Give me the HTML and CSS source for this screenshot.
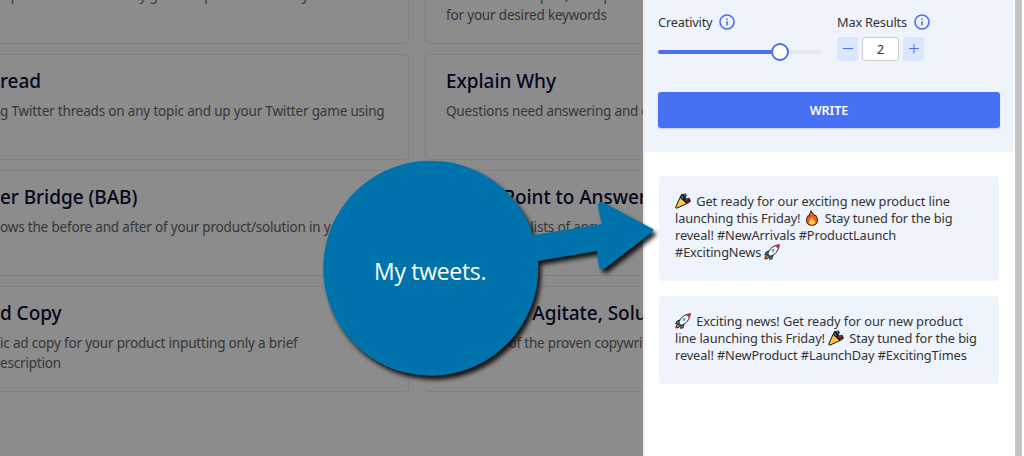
FILE: index.html
```
<!DOCTYPE html>
<html lang="en">
<head>
    <meta charset="UTF-8">
    <meta name="viewport" content="width=device-width, initial-scale=1.0">
    <title>AI Writer</title>
    <link rel="stylesheet" href="styles.css">
</head>
<body>
    <div class="app">
        <main class="templates">
            <div class="card left">
                <h2>Intro</h2>
                <p>a post that includes any great ad post made today</p>
            </div>
            <div class="card">
                <h2>Meta</h2>
                <p>Create short copies, then posts<br>for your desired keywords</p>
            </div>
            <div class="card left">
                <h2>read</h2>
                <p>g Twitter threads on any topic and up your Twitter game using</p>
            </div>
            <div class="card">
                <h2>Explain Why</h2>
                <p>Questions need answering and questions</p>
            </div>
            <div class="card left">
                <h2>er Bridge (BAB)</h2>
                <p>ows the before and after of your product/solution in your</p>
            </div>
            <div class="card">
                <h2>Bullet Point to Answer</h2>
                <p>Generate the lists of answers to points</p>
            </div>
            <div class="card left">
                <h2>d Copy</h2>
                <p>ic ad copy for your product inputting only a brief<br>escription</p>
            </div>
            <div class="card">
                <h2>Problem, Agitate, Solution</h2>
                <p>Make use of the proven copywriting</p>
            </div>
        </main>
        <div class="overlay"></div>

        <aside class="drawer">
            <section class="settings">
                <div class="fields">
                    <div class="field creativity">
                        <label>Creativity
                            <svg class="info" viewBox="0 0 16 16"><circle cx="8" cy="8" r="7"/><path d="M8 7.2v4.1M8 4.4v1.5"/></svg>
                        </label>
                        <div class="slider"><div class="fill"></div><div class="thumb"></div></div>
                    </div>
                    <div class="field">
                        <label>Max Results
                            <svg class="info" viewBox="0 0 16 16"><circle cx="8" cy="8" r="7"/><path d="M8 7.2v4.1M8 4.4v1.5"/></svg>
                        </label>
                        <div class="stepper">
                            <button class="step"><svg viewBox="0 0 10 10"><path d="M0 4.500h10"/></svg></button>
                            <span class="count">2</span>
                            <button class="step"><svg viewBox="0 0 10 10"><path d="M0 4.500h10M5 0v9.500"/></svg></button>
                        </div>
                    </div>
                </div>
                <button class="write">WRITE</button>
            </section>
            <section class="results">
                <div class="tweet">
                    <p class="wide"><svg class="emoji"><use href="#party"/></svg> Get ready for our exciting new product line</p>
                    <p>launching this Friday! <svg class="emoji"><use href="#fire"/></svg> Stay tuned for the big</p>
                    <p>reveal! #NewArrivals #ProductLaunch</p>
                    <p>#ExcitingNews <svg class="emoji"><use href="#rocket"/></svg></p>
                </div>
                <div class="tweet">
                    <p class="wide"><svg class="emoji"><use href="#rocket"/></svg> Exciting news! Get ready for our new product</p>
                    <p>line launching this Friday! <svg class="emoji"><use href="#party"/></svg> Stay tuned for the big</p>
                    <p>reveal! #NewProduct #LaunchDay #ExcitingTimes</p>
                </div>
            </section>
        </aside>
        <div class="scrollbar"></div>

        <!-- callout bubble -->
        <div class="callout">
            <svg viewBox="0 0 350 240">
                <path d="M213 77L282 66Q279 55 278 47Q279 42 284 45L333 71Q334 73 331 75L288 108Q283 113 280 110Q278 108 277 93L218 103A107.500 107.500 0 1 1 213 77Z"/>
            </svg>
            <span>My tweets.</span>
        </div>
    </div>

    <svg class="sprites">
        <symbol id="party" viewBox="0 0 16 16">
            <path d="M5 4.500L.7 14.200q.2 1.200 1.300.9L12 10.500z" fill="#ffc83d" stroke="#111"/>
            <path d="M5 4l2-3 2 1 1-1.500 1.500 2L10 5l2 1 2-1 1.500 3-2 2-2 .5z" fill="#17110f" stroke="#111" stroke-width=".8"/>
            <path d="M6.500 3l1.500 3M10 1.500l-.5 2" stroke="#148bb8" stroke-width="1.600"/>
            <path d="M10 7l4-.5M12 9l2 .5" stroke="#8e2929" stroke-width="1.800"/>
        </symbol>
        <symbol id="fire" viewBox="0 0 16 16">
            <path d="M7 .7C8 3 10 3.500 10.500 6l1-1C15 10 14 15.300 8 15.300S1 10 4.200 5.500l1 1C5 4 6.500 3 7 .7z" fill="#f45b16" stroke="#111" stroke-width=".9"/>
            <path d="M8 7c0 2 3.200 3 3 5.300-.2 3.300-6 3.300-6 0C5 10 7.500 9 8 7z" fill="#ffd04a"/>
        </symbol>
        <symbol id="rocket" viewBox="0 0 16 16">
            <path d="M4 11l-2.500 1L.8 15l3-.5L5.500 12z" fill="#e66b20" stroke="#111" stroke-width=".8"/>
            <path d="M5 7L2 8 .7 11l3.500-1zM9 11l-1 4-2.500.3L6 12z" fill="#199bd7" stroke="#111" stroke-width=".8"/>
            <path d="M3.800 10C5 5 9 1.500 15.300.7 14.500 7 11 11 6 12.300z" fill="#f4f6f8" stroke="#111" stroke-width=".9"/>
            <path d="M11 1.800l4.300-1.100-1 4.300z" fill="#d92b3a"/>
            <circle cx="9" cy="6.500" r="1.400" fill="#35b3e4"/>
        </symbol>
    </svg>
</body>
</html>
```

FILE: styles.css
```
* {
    box-sizing: border-box;
}

body {
    margin: 0;
    font-family: "Noto Sans", "Open Sans", sans-serif;
    color: #333;
    background-color: white;
    overflow: hidden;
}

h2, p {
    margin: 0;
}

.app {
    position: relative;
    display: flex;
    height: 456px;
    overflow: hidden;
}

.templates {
    flex: none;
    width: 643px;
    height: 456px;
    overflow: hidden;
    display: grid;
    grid-template-columns: 409px 409px;
    grid-auto-rows: 106px;
    align-content: end;
    gap: 10px 16px;
    padding-bottom: 64px;
}

.card {
    border: 1px solid #ececf0;
    border-radius: 4px;
    padding: 12px 20px;
    white-space: nowrap;
}

.card.left {
    border-left: none;
    border-radius: 0 4px 4px 0;
    padding-left: 0;
}

.card h2 {
    font-size: 19px;
    line-height: 28px;
    font-weight: 500;
    letter-spacing: -0.050px;
    color: #0b0b35;
}

.card p {
    margin-top: 6px;
    font-size: 13.500px;
    line-height: 20px;
    letter-spacing: -0.180px;
    color: #646467;
}

.overlay {
    position: absolute;
    left: 0;
    top: 0;
    width: 643px;
    height: 456px;
    background-color: rgba(0, 0, 0, 0.45);
}

.drawer {
    width: 372px;
    flex: none;
    border-left: 2px solid #eee;
    background-color: white;
}

.settings {
    width: 368px;
    height: 152px;
    padding: 12px 13px 0;
    background-color: #eff4fc;
}

.fields {
    display: flex;
    gap: 16px;
    height: 80px;
}

.creativity {
    width: 163px;
}

.field label {
    display: flex;
    align-items: center;
    gap: 7px;
    height: 20px;
    font-size: 12.800px;
    letter-spacing: -0.200px;
}

.info {
    width: 16px;
    height: 16px;
    fill: none;
    stroke: #4770f4;
    stroke-width: 1.600;
}

.slider {
    display: flex;
    align-items: center;
    height: 20px;
    margin-top: 10px;
    background: linear-gradient(#e5e9f3, #e5e9f3) center / 100% 4px no-repeat;
}

.fill {
    width: 113px;
    height: 4px;
    border-radius: 2px 0 0 2px;
    background-color: #4770f4;
}

.thumb {
    width: 18px;
    height: 18px;
    border: 2px solid #4770f4;
    border-radius: 50%;
    background-color: white;
}

.stepper {
    display: flex;
    gap: 4px;
    margin-top: 5px;
}

.step {
    display: flex;
    align-items: center;
    justify-content: center;
    width: 21px;
    height: 24px;
    padding: 0;
    border: none;
    border-radius: 3px;
    background-color: #dbe7ff;
}

.step svg {
    width: 10px;
    height: 10px;
    stroke: #4770f4;
    stroke-width: 1;
}

.count {
    width: 37px;
    height: 24px;
    border: 1px solid #ccc;
    border-radius: 3px;
    background-color: white;
    font-size: 13px;
    line-height: 23px;
    text-align: center;
}

.write {
    display: block;
    width: 342px;
    height: 36px;
    border: none;
    border-radius: 3px;
    background-color: #4770f4;
    box-shadow: 0 1px 2px rgba(0, 0, 0, 0.15);
    color: white;
    font-family: inherit;
    font-size: 12.500px;
    font-weight: 600;
}

.results {
    display: flex;
    flex-direction: column;
    gap: 15px;
    padding: 24px 14px;
}

.tweet {
    width: 340px;
    padding: 17px 16px 20px;
    border-radius: 4px;
    background-color: #eff4fc;
    font-size: 12.800px;
    line-height: 17px;
    letter-spacing: -0.130px;
}

.tweet p {
    height: 17px;
    white-space: nowrap;
}

.tweet .wide {
    letter-spacing: -0.080px;
}

.emoji {
    width: 16px;
    height: 16px;
    margin-right: 2px;
    vertical-align: -3px;
}

.scrollbar {
    width: 7px;
    background-color: #c4c4c4;
}

.callout {
    position: absolute;
    left: 320px;
    top: 158px;
    width: 350px;
    height: 240px;
}

.callout svg {
    width: 350px;
    height: 240px;
    fill: #0073ad;
    filter: drop-shadow(3px 4px 2px rgba(0, 0, 0, 0.85));
}

.callout span {
    position: absolute;
    left: 54px;
    top: 98px;
    font-family: "Open Sans", sans-serif;
    font-size: 23px;
    line-height: 30px;
    color: white;
    white-space: nowrap;
    letter-spacing: -0.300px;
}

.sprites {
    position: absolute;
    width: 0;
    height: 0;
}
```
